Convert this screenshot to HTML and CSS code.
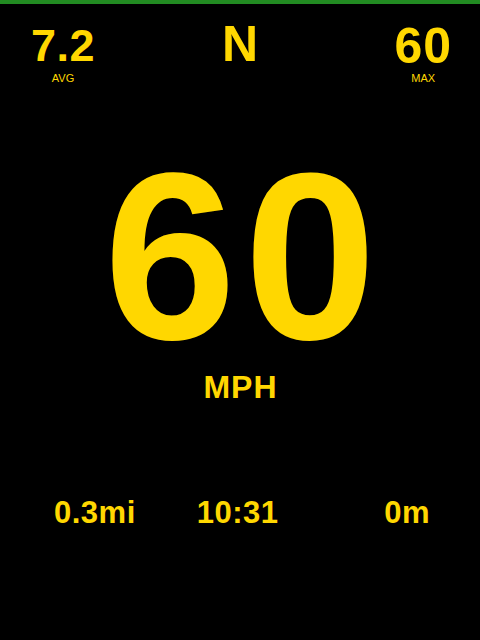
FILE: index.html
```html
<!DOCTYPE html>
<html lang="en">
<head>
<meta charset="utf-8">
<title>Speedometer</title>
<link rel="stylesheet" href="styles.css">
</head>
<body>
<div class="screen">
  <div class="status-bar"></div>
  <div class="top-row">
    <div class="stat stat-left">
      <div class="stat-value small">7.2</div>
      <div class="stat-label">AVG</div>
    </div>
    <div class="heading">N</div>
    <div class="stat stat-right">
      <div class="stat-value">60</div>
      <div class="stat-label label-max">MAX</div>
    </div>
  </div>
  <div class="speed">
    <div class="speed-value">60</div>
    <div class="speed-unit">MPH</div>
  </div>
  <div class="bottom-row">
    <div class="info">0.3mi</div>
    <div class="info">10:31</div>
    <div class="info info-right">0m</div>
  </div>
</div>
</body>
</html>
```
FILE: styles.css
```css
html, body {
  margin: 0;
  padding: 0;
  background: #000;
}
body {
  font-family: "Liberation Sans", Arial, sans-serif;
  color: #ffd700;
  width: 480px;
  height: 640px;
  overflow: hidden;
}
.screen {
  display: flex;
  flex-direction: column;
}
.status-bar {
  height: 4px;
  background: #228b22;
}
.top-row {
  display: grid;
  grid-template-columns: 1fr auto 1fr;
  align-items: start;
  padding: 15px 28px 0 28px;
}
.stat {
  display: flex;
  flex-direction: column;
  align-items: center;
}
.stat-left {
  justify-self: start;
  margin: 4px 0 0 3px;
}
.stat-right {
  justify-self: end;
  margin-top: 2px;
}
.stat-value {
  font-size: 50px;
  font-weight: bold;
  line-height: 1;
  letter-spacing: 1px;
}
.stat-value.small {
  font-size: 45px;
  letter-spacing: 0.5px;
}
.stat-label {
  font-size: 11px;
  line-height: 1;
  margin-top: 5px;
}
.label-max {
  margin-top: 2px;
}
.heading {
  font-size: 50px;
  font-weight: bold;
  line-height: 1;
}
.speed {
  display: flex;
  flex-direction: column;
  align-items: center;
  margin-top: 73px;
}
.speed-value {
  font-size: 238px;
  font-weight: bold;
  line-height: 200px;
  letter-spacing: 8px;
  padding-left: 8px;
}
.speed-unit {
  font-size: 32px;
  font-weight: bold;
  line-height: 1;
  letter-spacing: 1px;
  padding-left: 1px;
  margin-top: 14px;
}
.bottom-row {
  display: flex;
  gap: 61px;
  padding: 0 50px 0 54px;
  margin-top: 94px;
}
.info {
  font-size: 31px;
  font-weight: bold;
  line-height: 1;
  letter-spacing: 0.5px;
}
.info-right {
  margin-left: auto;
}
```
